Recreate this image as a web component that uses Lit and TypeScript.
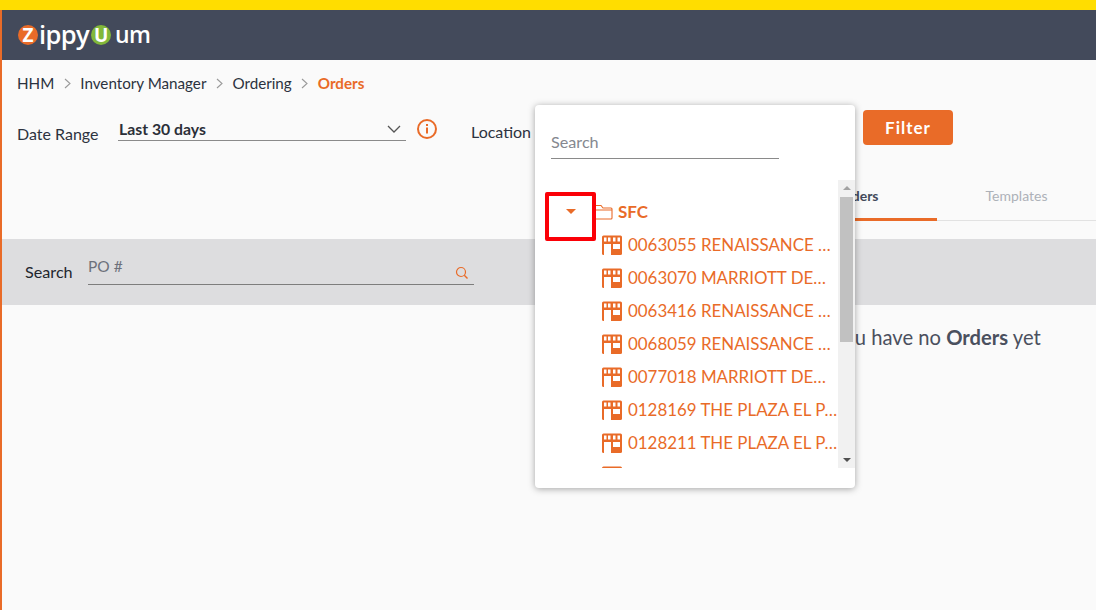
import { LitElement, html, css, svg, unsafeCSS } from "lit";
import { customElement } from "lit/decorators.js";

const ORANGE = "#e96b28";
const O = unsafeCSS(ORANGE);
const stores = [
  "0063055 RENAISSANCE DENVER HOTEL",
  "0063070 MARRIOTT DENVER CITY",
  "0063416 RENAISSANCE DALLAS HOTEL",
  "0068059 RENAISSANCE BOSTON HOTEL",
  "0077018 MARRIOTT DENVER TECH",
  "0128169 THE PLAZA EL PASO HOTEL",
  "0128211 THE PLAZA EL PASO BAR",
  "0128212 THE PLAZA EL PASO CAFE",
];

const storeIcon = svg`<svg class="store" width="20" height="20" viewBox="0 0 20 20">
  <rect x="0" y="0.500" width="20" height="19.500" rx="1.500" fill="${ORANGE}"/>
  <path fill="#fff" d="M2 9h7v11H2zM11 9h7v5h-7z"/>
  <path fill="#fff" d="M2 2.500h2.500v4H2zM6 2.500h2.500v4H6zM11 2.500h2.500v4H11zM15.500 2.500H18v4h-2.500z"/>
</svg>`;

@customElement("app-root")
export class AppRoot extends LitElement {
  static styles = css`
    :host {
      display: block;
      position: relative;
      width: 1096px;
      height: 610px;
      overflow: hidden;
      background: #fafafa;
      font-family: Lato, "Liberation Sans", sans-serif;
      color: #2d3340;
    }
    .topbar { height: 10px; background: #ffdd00; }
    .shell { display: flex; flex-direction: column; height: 600px; border-left: 2px solid ${O}; box-sizing: border-box; }
    .header { height: 50px; flex: none; background: #434a5b; display: flex; align-items: center; padding-left: 16px; }
    .logo { display: flex; align-items: center; color: #fff; font-family: "Open Sans", sans-serif; font-size: 25.500px; font-weight: 600; line-height: 24px; letter-spacing: -0.6px; }
    .badge { width: 20px; height: 20px; border-radius: 50%; display: flex; align-items: center; justify-content: center; font-size: 19px; font-weight: 700; line-height: 20px; flex: none; letter-spacing: 0; }
    .badge.z { background: ${O}; margin-right: 1px; }
    .badge.u { background: #82b83a; margin-left: 2px; margin-right: 4px; }
    .word { position: relative; top: -1px; }
    .word.um { font-size: 23px; }
    .crumbs { display: flex; align-items: center; margin: 14px 0 0 15px; height: 18px; font-size: 15.200px; line-height: 18px; color: #2b3240; }
    .crumbs svg { margin: 0 9.500px; }
    .crumbs .cur { color: ${O}; font-weight: 700; }
    .filters { display: flex; height: 35px; margin-top: 18px; position: relative; }
    .flabel { font-size: 16px; line-height: 20px; margin: 14px 0 0 15px; width: 101px; flex: none; }
    .select { width: 288px; height: 30px; box-sizing: border-box; margin-top: 1px; padding: 6px 5px 0 1px; border-bottom: 1px solid #8a8a8a; display: flex; align-items: center; justify-content: space-between; font-size: 15.800px; font-weight: 700; color: #2b2f38; flex: none; }
    .info { margin: 9px 0 0 11px; flex: none; }
    .loc { font-size: 16px; line-height: 20px; margin: 12px 0 0 34px; flex: none; }
    .filter-btn { position: absolute; left: 861px; top: 0; width: 90px; height: 35px; border: 0; border-radius: 4px; background: ${O}; color: #fff; font: 700 17px Lato, sans-serif; letter-spacing: 1px; padding: 0; }
    .tabs { display: flex; align-self: flex-end; width: 319px; height: 41px; margin-top: 34px; border-bottom: 1px solid #e2e2e2; flex: none; font-size: 14px; }
    .tab { width: 160px; text-align: center; line-height: 34px; font-weight: 700; color: #adb1b8; box-sizing: border-box; }
    .tab.on { color: #434a5b; border-bottom: 3px solid ${O}; height: 42px; }
    .tab.plain { font-weight: 400; width: 159px; }
    .band { height: 66px; margin-top: 18px; background: #dddddf; display: flex; flex: none; padding-left: 23px; }
    .slabel { font-size: 16.200px; line-height: 20px; margin-top: 23px; width: 63px; color: #22262e; flex: none; }
    .sinput { width: 386px; height: 35px; margin-top: 11px; box-sizing: border-box; border-bottom: 1px solid #7d7d7d; display: flex; justify-content: space-between; font-size: 15.500px; line-height: 18px; color: #6d717b; }
    .sinput span { margin-top: 7px; }
    .sinput svg { margin: 16px 5px 0 0; }
    .empty { margin: 20px 0 0 831px; font-size: 20.200px; line-height: 24px; color: #4a505e; white-space: nowrap; }
    .pop { position: absolute; left: 535px; top: 105px; width: 320px; height: 383px; background: #fff; border-radius: 4px; box-shadow: 0 1px 7px rgba(0,0,0,0.35); display: flex; flex-direction: column; }
    .psearch { margin: 16px 0 0 16px; width: 228px; height: 38px; box-sizing: border-box; border-bottom: 1px solid #8a8a8a; font-size: 16.200px; line-height: 20px; color: #85888f; padding-top: 11px; flex: none; }
    .pbody { display: flex; height: 288px; margin-top: 21px; flex: none; }
    .tree { flex: 1; overflow: hidden; position: relative; color: ${O}; }
    .root { display: flex; align-items: center; height: 33px; margin-top: 15px; padding-left: 31px; font-size: 17px; font-weight: 700; }
    .caret { width: 0; height: 0; border: 5px solid transparent; border-top: 5px solid ${O}; border-bottom: 0; margin-right: 18px; }
    .root svg { margin-right: 5px; }
    .row { display: flex; align-items: center; height: 33px; padding-left: 67px; font-size: 16.900px; }
    .row .store { flex: none; margin-right: 6px; }
    .row span { width: 210px; overflow: hidden; white-space: nowrap; text-overflow: ellipsis; }
    .sb { width: 17px; flex: none; background: #f1f1f1; display: flex; flex-direction: column; align-items: center; justify-content: space-between; position: relative; }
    .arrow { width: 0; height: 0; border: 4px solid transparent; }
    .arrow.up { border-top: 0; border-bottom: 4px solid #a3a3a3; margin-top: 6px; }
    .arrow.down { border-bottom: 0; border-top: 4px solid #505050; margin-bottom: 6px; }
    .thumb { position: absolute; left: 2px; top: 17px; width: 13px; height: 145px; background: #c1c1c1; }
    .mark { position: absolute; left: 10px; top: 87px; width: 51px; height: 49px; box-sizing: border-box; border: 4px solid #fb0007; border-radius: 2px; }
  `;

  render() {
    return html`
      <div class="topbar"></div>
      <div class="shell">
        <div class="header">
          <div class="logo">
            <span class="badge z">Z</span><span class="word">ippy</span><span class="badge u">U</span><span class="word um">um</span>
          </div>
        </div>
        <div class="crumbs">
          <span>HHM</span>
          ${this.chev()}
          <span>Inventory Manager</span>
          ${this.chev()}
          <span>Ordering</span>
          ${this.chev()}
          <span class="cur">Orders</span>
        </div>
        <div class="filters">
          <div class="flabel">Date Range</div>
          <div class="select">
            <span>Last 30 days</span>
            <svg width="14" height="8" viewBox="0 0 14 8"><path d="M1 1l6 6 6-6" fill="none" stroke="#555" stroke-width="1.300"/></svg>
          </div>
          <svg class="info" width="20" height="20" viewBox="0 0 20 20">
            <circle cx="10" cy="10" r="9" fill="none" stroke="${ORANGE}" stroke-width="2"/>
            <rect x="9" y="8.500" width="2" height="6" fill="${ORANGE}"/>
            <rect x="9" y="5" width="2" height="2" fill="${ORANGE}"/>
          </svg>
          <div class="loc">Location</div>
          <button class="filter-btn">Filter</button>
        </div>
        <div class="tabs">
          <div class="tab on">Orders</div>
          <div class="tab plain">Templates</div>
        </div>
        <div class="band">
          <div class="slabel">Search</div>
          <div class="sinput">
            <span>PO #</span>
            <svg width="14" height="14" viewBox="0 0 14 14"><circle cx="6" cy="6" r="4.500" fill="none" stroke="${ORANGE}" stroke-width="1.200"/><path d="M9.300 9.300L12.500 12.500" stroke="${ORANGE}" stroke-width="1.400"/></svg>
          </div>
        </div>
        <div class="empty">You have no <b>Orders</b> yet</div>
      </div>
      <div class="pop">
        <div class="psearch">Search</div>
        <div class="pbody">
          <div class="tree">
            <div class="root">
              <i class="caret"></i>
              <svg width="19" height="16" viewBox="0 0 19 16"><path d="M1 14V2.500a1 1 0 0 1 1-1h5l2 2.500h8a1 1 0 0 1 1 1V14a1 1 0 0 1-1 1H2a1 1 0 0 1-1-1zM1 6h17" fill="none" stroke="${ORANGE}" stroke-width="1.100"/></svg>
              SFC
            </div>
            ${stores.map((s) => html`<div class="row">${storeIcon}<span>${s}</span></div>`)}
          </div>
          <div class="sb">
            <i class="arrow up"></i>
            <div class="thumb"></div>
            <i class="arrow down"></i>
          </div>
        </div>
        <div class="mark"></div>
      </div>
    `;
  }

  chev() {
    return html`<svg width="7" height="11" viewBox="0 0 7 11"><path d="M1 1l5 4.500-5 4.500" fill="none" stroke="#9a9a9a" stroke-width="1.100"/></svg>`;
  }
}
